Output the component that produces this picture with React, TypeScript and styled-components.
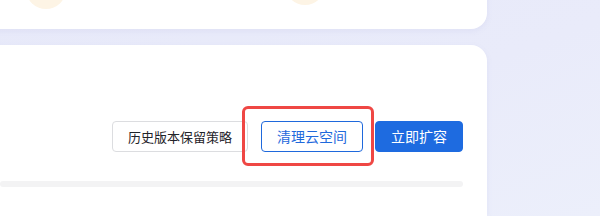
import React from 'react';
import styled, {createGlobalStyle} from 'styled-components';

const GlobalStyle = createGlobalStyle`
    html, body {
        margin: 0;
        padding: 0;
        width: 600px;
        height: 216px;
        overflow: hidden;
    }
    body {
        background: linear-gradient(160deg, #e7e9f9 0%, #e9ebfa 55%, #eceffb 100%);
        font-family: "Noto Sans CJK SC", "Noto Sans", sans-serif;
    }
`;

const Page = styled.div`
    display: flex;
    flex-direction: column;
    gap: 16px;
    width: 527px;
    height: 276px;
    margin-left: -40px;
    margin-top: -60px;
`;

const Card = styled.div<{$height?: number}>`
    position: relative;
    background: #fff;
    border-radius: 16px;
    box-shadow: 0 2px 6px rgba(110, 118, 190, 0.08);
    height: ${(p) => (p.$height ? `${p.$height}px` : 'auto')};
    flex-shrink: 0;
    overflow: hidden;
`;

const Dot = styled.div<{$left: number, $top: number}>`
    position: absolute;
    left: ${(p) => p.$left}px;
    top: ${(p) => p.$top}px;
    width: 40px;
    height: 40px;
    border-radius: 50%;
    background: #fdf4e5;
`;

const StorageCard = styled(Card)`
    flex: 1;
    border-radius: 16px 16px 0 0;
    padding: 76px 24px 0 40px;
    display: flex;
    flex-direction: column;
`;

const Actions = styled.div`
    display: flex;
    justify-content: flex-end;
    align-items: center;
    gap: 12px;
`;

const BaseButton = styled.button`
    box-sizing: border-box;
    height: 31px;
    padding: 0 15px;
    border-radius: 4px;
    font-family: "Noto Sans CJK SC", "Noto Sans", sans-serif;
    font-size: 14px;
    line-height: 29px;
    cursor: pointer;
    white-space: nowrap;
`;

const PlainButton = styled(BaseButton)`
    background: #fff;
    border: 1px solid #dcdde0;
    color: #1f2329;
    font-size: 13px;
    margin-right: 1px;
`;

const OutlineButton = styled(BaseButton)`
    background: #fff;
    border: 1px solid #1f69dc;
    color: #1f69dc;
`;

const PrimaryButton = styled(BaseButton)`
    background: #1e6be0;
    border: 1px solid #1e6be0;
    color: #fff;
`;

const Highlight = styled.div`
    position: relative;
    display: flex;
`;

const HighlightRing = styled.span`
    position: absolute;
    left: -19px;
    top: -15px;
    right: -11px;
    bottom: -14px;
    border: 3px solid #ef4744;
    border-radius: 6px;
    pointer-events: none;
`;

const Track = styled.div`
    margin-top: 29px;
    height: 6px;
    border-radius: 3px;
    background: #f3f3f4;
`;

const App = () => {
    return (
        <>
            <GlobalStyle/>
            <Page>
                <Card $height={89}>
                    <Dot $left={66} $top={29}/>
                    <Dot $left={325} $top={25}/>
                </Card>
                <StorageCard>
                    <Actions>
                        <PlainButton>{'历史版本保留策略'}</PlainButton>
                        <Highlight>
                            <OutlineButton>{'清理云空间'}</OutlineButton>
                            <HighlightRing/>
                        </Highlight>
                        <PrimaryButton>{'立即扩容'}</PrimaryButton>
                    </Actions>
                    <Track/>
                </StorageCard>
            </Page>
        </>
    );
};

export default App;
